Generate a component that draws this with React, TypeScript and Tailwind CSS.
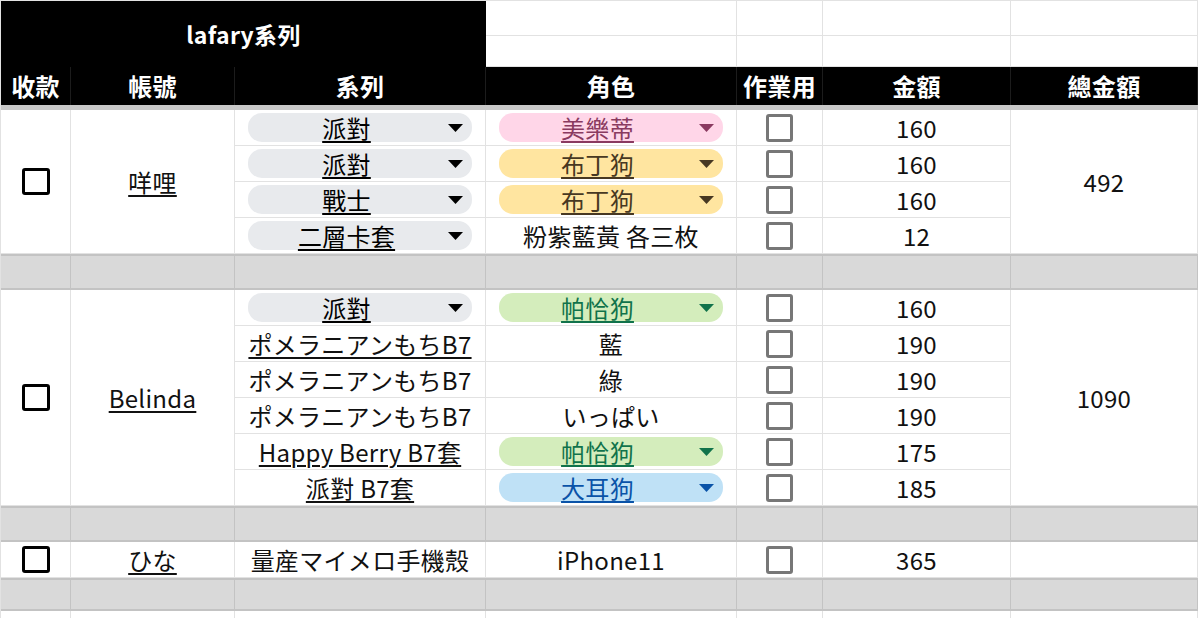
import type { ReactNode } from "react";

type Tone = "grey" | "pink" | "yellow" | "green" | "blue";

const tones: Record<Tone, string> = {
  grey: "bg-[#e8eaed] text-black",
  pink: "bg-[#ffd6e8] text-[#8a3a60]",
  yellow: "bg-[#ffe5a0] text-[#473822]",
  green: "bg-[#d4edbc] text-[#11734b]",
  blue: "bg-[#bfe1f6] text-[#0a53a8]",
};

type Val = string | { chip: string; tone: Tone } | { link: string };

type Line = { series: Val; role: Val; price: string };

type Group = { account: string; total: string; lines: Line[] };

const groups: Group[] = [
  {
    account: "咩哩",
    total: "492",
    lines: [
      { series: { chip: "派對", tone: "grey" }, role: { chip: "美樂蒂", tone: "pink" }, price: "160" },
      { series: { chip: "派對", tone: "grey" }, role: { chip: "布丁狗", tone: "yellow" }, price: "160" },
      { series: { chip: "戰士", tone: "grey" }, role: { chip: "布丁狗", tone: "yellow" }, price: "160" },
      { series: { chip: "二層卡套", tone: "grey" }, role: "粉紫藍黃 各三枚", price: "12" },
    ],
  },
  {
    account: "Belinda",
    total: "1090",
    lines: [
      { series: { chip: "派對", tone: "grey" }, role: { chip: "帕恰狗", tone: "green" }, price: "160" },
      { series: { link: "ポメラニアンもちB7" }, role: "藍", price: "190" },
      { series: "ポメラニアンもちB7", role: "綠", price: "190" },
      { series: "ポメラニアンもちB7", role: "いっぱい", price: "190" },
      { series: { link: "Happy Berry B7套" }, role: { chip: "帕恰狗", tone: "green" }, price: "175" },
      { series: { link: "派對 B7套" }, role: { chip: "大耳狗", tone: "blue" }, price: "185" },
    ],
  },
  {
    account: "ひな",
    total: "",
    lines: [{ series: "量産マイメロ手機殼", role: "iPhone11", price: "365" }],
  },
];

const base = "flex items-center justify-center border-r border-b border-[#e2e2e2]";

function Cell({ className = "", children }: { className?: string; children?: ReactNode }) {
  return <div className={`${base} ${className}`}>{children}</div>;
}

function Head({ children }: { children?: ReactNode }) {
  return (
    <div className="flex items-center justify-center border-r border-[#1c1c1c] bg-black font-bold text-white">
      {children}
    </div>
  );
}

function Chip({ label, tone }: { label: string; tone: Tone }) {
  return (
    <div className={`mx-[13px] flex h-[29px] w-full items-center rounded-[14px] pr-[9px] ${tones[tone]}`}>
      <span className="flex-1 text-center underline decoration-[1.5px] underline-offset-[3px]">{label}</span>
      <svg width="15" height="8" viewBox="0 0 15 8" className="ml-[3px] shrink-0">
        <polygon points="0,0 15,0 7.5,8" fill="currentColor" />
      </svg>
    </div>
  );
}

function Value({ v }: { v: Val }) {
  if (typeof v === "string") return <span>{v}</span>;
  if ("chip" in v) return <Chip label={v.chip} tone={v.tone} />;
  return <span className="underline decoration-[1.5px] underline-offset-[3px]">{v.link}</span>;
}

function Box({ dark }: { dark?: boolean }) {
  return dark ? (
    <div className="h-[27px] w-[28px] rounded-[3px] border-[3px] border-black" />
  ) : (
    <div className="h-[28px] w-[27px] rounded-[3px] border-[3px] border-[#777]" />
  );
}

function GreyRow() {
  return (
    <>
      {[0, 1, 2, 3, 4, 5, 6].map(i => (
        <div key={i} className="border-t-2 border-b-2 border-r border-[#c3c3c3] bg-[#d9d9d9]" />
      ))}
    </>
  );
}

export default function App() {
  return (
    <div className="h-[618px] w-[1198px] overflow-hidden bg-white font-['Noto_Sans_CJK_TC','Noto_Sans',sans-serif] text-[24px] tracking-[0.3px] text-[#111]">
      <div className="grid grid-cols-[70px_164px_251px_251px_86px_188px_187px] grid-rows-[35px_31px_38px_5px_repeat(4,36px)_36px_repeat(6,36px)_36px_36px_33px_36px] border-t border-l border-[#e2e2e2]">
        {/* title block */}
        <div className="col-span-3 row-span-2 flex items-center justify-center bg-black text-[23px] font-bold text-white">
          lafary系列
        </div>
        {[0, 1, 2, 3, 4, 5, 6, 7].map(i => <Cell key={i} />)}

        {/* header */}
        <Head>收款</Head>
        <Head>帳號</Head>
        <Head>系列</Head>
        <Head>角色</Head>
        <Head>作業用</Head>
        <Head>金額</Head>
        <Head>總金額</Head>
        <div className="col-span-7 bg-[#c8c8c8]" />

        {groups.map(g => {
          const span = g.lines.length === 6 ? "row-span-6" : g.lines.length === 4 ? "row-span-4" : "row-span-1";
          return (
            <div key={g.account} className="contents">
              {g.lines.map((l, i) => (
                <div key={i} className="contents">
                  {i === 0 && (
                    <Cell className={span}>
                      <Box dark />
                    </Cell>
                  )}
                  {i === 0 && (
                    <Cell className={span}>
                      <span className="underline decoration-[1.5px] underline-offset-[3px]">{g.account}</span>
                    </Cell>
                  )}
                  <Cell>
                    <Value v={l.series} />
                  </Cell>
                  <Cell>
                    <Value v={l.role} />
                  </Cell>
                  <Cell>
                    <Box />
                  </Cell>
                  <Cell>{l.price}</Cell>
                  {i === 0 && <Cell className={span}>{g.total}</Cell>}
                </div>
              ))}
              <GreyRow />
            </div>
          );
        })}

        {[0, 1, 2, 3, 4, 5, 6].map(i => <Cell key={i} />)}
      </div>
    </div>
  );
}
